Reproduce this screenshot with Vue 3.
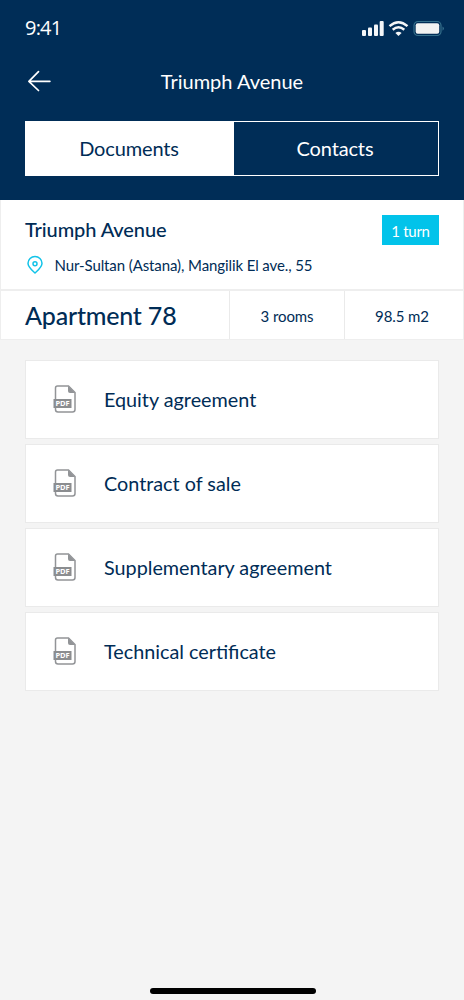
<script setup>
const documents = ['Equity agreement', 'Contract of sale', 'Supplementary agreement', 'Technical certificate']
</script>

<template>
  <main class="screen">
    <header class="top">
      <div class="status">
        <span class="time">9:41</span>
        <svg class="indicators" width="84" height="18" viewBox="0 0 84 18">
          <g fill="#f4f6f8">
            <rect x="0" y="10" width="4" height="6" rx="1" />
            <rect x="6" y="7.5" width="4" height="8.5" rx="1" />
            <rect x="12" y="4.500" width="4" height="11.500" rx="1" />
            <rect x="17.700" y="1" width="4" height="15" rx="1" />
            <path d="M36.500 16 L33.400 12.900 Q36.500 10.500 39.600 12.900 Z" />
          </g>
          <g fill="none" stroke="#f4f6f8" stroke-width="2.500">
            <path d="M27.500 6.100 Q36.500 -1.700 45.500 6.100" />
            <path d="M30.700 9.700 Q36.500 4.900 42.300 9.700" />
          </g>
          <rect x="52" y="1.500" width="27" height="14" rx="4" fill="none" stroke="#356f8b" stroke-width="1.200" />
          <rect x="53.700" y="3.300" width="23.500" height="10.500" rx="2" fill="#f2f2f2" />
          <path d="M80.500 6.500 Q83.500 8.500 80.500 10.700 Z" fill="#356f8b" />
        </svg>
      </div>
      <div class="nav">
        <svg class="back" width="24" height="22" viewBox="0 0 24 22" fill="none" stroke="#fff" stroke-width="1.700" stroke-linecap="round" stroke-linejoin="round">
          <path d="M11.500 1.700 L1.900 11.300 L11.500 20.500 M2.200 11.300 H22.900" />
        </svg>
        <h1>Triumph Avenue</h1>
      </div>
      <div class="tabs">
        <button class="tab active">Documents</button>
        <button class="tab">Contacts</button>
      </div>
    </header>

    <section class="property">
      <div class="summary">
        <div class="headline">
          <h2>Triumph Avenue</h2>
          <span class="badge">1 turn</span>
        </div>
        <div class="address">
          <svg width="18" height="20" viewBox="0 0 18 20" fill="none" stroke="#12c3e8" stroke-width="1.500">
            <path d="M9 18 C7 16 2 12.500 2 8.300 A7 6.800 0 0 1 16 8.300 C16 12.500 11 16 9 18 Z" stroke-linejoin="round" />
            <circle cx="9" cy="8.700" r="2" />
          </svg>
          <span>Nur-Sultan (Astana), Mangilik El ave., 55</span>
        </div>
      </div>
      <div class="facts">
        <strong>Apartment 78</strong>
        <span>3 rooms</span>
        <span class="area">98.5 m2</span>
      </div>
    </section>

    <ul class="documents">
      <li v-for="name in documents" :key="name">
        <svg width="24" height="30" viewBox="0 0 24 30">
          <path d="M4.500 2 H15.500 L22 8.500 V25.500 Q22 28 19.500 28 H5 Q2.500 28 2.500 25.500 V4 Q2.500 2 4.500 2" fill="#fff" stroke="#929497" stroke-width="1.500" />
          <path d="M15 2 L22 9 H17 Q15 9 15 7 Z" fill="#929497" />
          <rect x="0.500" y="15" width="18" height="9" fill="#8b8d90" />
          <text x="9.500" y="22.200" text-anchor="middle" class="pdf">PDF</text>
        </svg>
        <span>{{ name }}</span>
      </li>
    </ul>
    <div class="home"></div>
  </main>
</template>

<style>
body { margin: 0; }
</style>

<style scoped>
* { box-sizing: border-box; }
.screen {
  display: flex;
  flex-direction: column;
  width: 464px;
  height: 1000px;
  background: #f4f4f4;
  color: #002c56;
  font-family: Lato, "Liberation Sans", sans-serif;
  letter-spacing: -0.1px;
}
.top { height: 200px; padding: 0 25px; background: #002d57; color: #fff; flex: none; }
.status { display: flex; justify-content: space-between; height: 56px; padding-top: 16px; }
.time { font: 20px/24px "Open Sans", sans-serif; letter-spacing: -0.8px; }
.indicators { margin: 4px -7px 0 0; }
.nav { display: grid; grid-template-columns: 24px 1fr 24px; height: 65px; padding-top: 13px; }
.back { margin: 1px 0 0 2px; }
h1, h2 { margin: 0; font-size: 20px; line-height: 24px; }
h1 { font-weight: 400; text-align: center; letter-spacing: 0; }
.tabs { display: grid; grid-template-columns: 208px 1fr; height: 55px; border: 1px solid #fff; }
.tab { padding: 0 2px 2px 0; border: 0; background: transparent; color: #fff; font: 400 20px/24px Lato, sans-serif; letter-spacing: -0.15px; }
.tab.active { background: #fff; color: #002c56; }
.property { height: 140px; flex: none; background: #fff; border: 1px solid #eee; border-top: 0; }
.summary { height: 91px; padding: 15px 24px 0; border-bottom: 2px solid #eee; }
.headline { display: flex; justify-content: space-between; height: 30px; }
h2 { font-weight: 500; padding-top: 2px; }
.badge { width: 57px; height: 30px; background: #02c3ea; color: #fff; font-size: 15px; line-height: 32px; text-align: center; letter-spacing: -0.3px; }
.address { display: flex; align-items: center; gap: 11px; height: 20px; margin-top: 10px; font-size: 15px; }
.address svg { margin-left: 0.500px; }
.facts { display: grid; grid-template-columns: 228px 115px 1fr; height: 48px; line-height: 50px; font-size: 15px; text-align: center; }
.facts strong { padding-left: 24px; font-size: 25px; line-height: 49px; font-weight: 500; text-align: left; letter-spacing: -0.2px; }
.facts span { height: 48px; border-left: 1px solid #eaeaea; }
.facts .area { padding-right: 4px; }
.documents { display: flex; flex-direction: column; gap: 5px; margin: 20px 25px 0; padding: 0; list-style: none; }
.documents li { display: flex; align-items: center; gap: 27px; height: 79px; padding-left: 27px; border: 1px solid #eaeaea; background: #fff; font-size: 19.800px; letter-spacing: normal; }
.documents svg { margin-bottom: 2px; }
.documents span { padding-bottom: 2px; }
.pdf { fill: #fff; font: 700 7.500px "Open Sans", sans-serif; letter-spacing: -0.2px; }
.home { width: 166px; height: 6px; margin: auto auto 6px 150px; border-radius: 3px; background: #000; }
</style>
